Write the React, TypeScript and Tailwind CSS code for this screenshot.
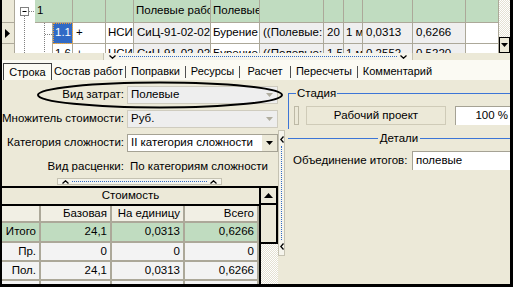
import React from 'react';

type Cell = { c: string; t?: string };

const line = 'border-[#aca899]';

const row1: Cell[] = [
  { c: 'w-[38px]', t: '1' },
  { c: 'w-[33px]' },
  { c: 'w-[28px]' },
  { c: 'w-[77px]', t: 'Полевые работы' },
  { c: 'w-[49px]', t: 'Полевые' },
  { c: 'w-[64px]' },
  { c: 'w-[20px]' },
  { c: 'w-[19px]' },
  { c: 'w-[50px]' },
  { c: 'w-[53px]' },
  { c: 'w-[33px]' },
];

const row2: Cell[] = [
  { c: 'w-[20px] bg-[#316ac5] text-white outline-1 outline-dotted outline-[#f0a030] -outline-offset-1', t: '1.1' },
  { c: 'w-[33px] bg-white pl-[3px]', t: '+' },
  { c: 'w-[28px] bg-white', t: 'НСИ' },
  { c: 'w-[77px] bg-[#efefef] pl-[3px]', t: 'СиЦ-91-02-02-(01)' },
  { c: 'w-[49px] bg-white', t: 'Бурение' },
  { c: 'w-[64px] bg-[#efefef] pl-[3px]', t: '((Полевые: 1)' },
  { c: 'w-[20px] bg-[#efefef] pl-[3px]', t: '20' },
  { c: 'w-[19px] bg-[#efefef]', t: '1 м' },
  { c: 'w-[50px] bg-[#efefef] pl-[3px]', t: '0,0313' },
  { c: 'w-[53px] bg-[#efefef] pl-[3px]', t: '0,6266' },
  { c: 'w-[33px] bg-white' },
];

const row3: Cell[] = [
  { c: 'w-[20px] bg-white', t: '1.6' },
  { c: 'w-[33px] bg-white pl-[3px]', t: '+' },
  { c: 'w-[28px] bg-white', t: 'НСИ' },
  { c: 'w-[77px] bg-[#efefef] pl-[3px]', t: 'СиЦ-91-02-02-(02)' },
  { c: 'w-[49px] bg-white', t: 'Бурение' },
  { c: 'w-[64px] bg-[#efefef] pl-[3px]', t: '((Полевые: 1)' },
  { c: 'w-[20px] bg-[#efefef] pl-[3px]', t: '1,5' },
  { c: 'w-[19px] bg-[#efefef]', t: '1 м' },
  { c: 'w-[50px] bg-[#efefef] pl-[3px]', t: '0,2552' },
  { c: 'w-[53px] bg-[#efefef] pl-[3px]', t: '0,5220' },
  { c: 'w-[33px] bg-white' },
];

const checker =
  'bg-[repeating-conic-gradient(#ffffff_0%_25%,#e4e1d3_0%_50%)] bg-[length:2px_2px]';

function GridCells({ cells, extra }: { cells: Cell[]; extra?: string }) {
  return (
    <>
      {cells.map((cell, i) => (
        <div
          key={i}
          className={`shrink-0 h-full flex items-center pl-[2px] overflow-hidden whitespace-nowrap border-r border-b ${line} ${extra || ''} ${cell.c}`}
        >
          {cell.t}
        </div>
      ))}
    </>
  );
}

function ChevronDown() {
  return (
    <svg width="7" height="4" viewBox="0 0 7 4">
      <path d="M0.5 0.5L3.5 3.2L6.5 0.5" stroke="#000" strokeWidth="1.3" fill="none" />
    </svg>
  );
}

function ChevronUp() {
  return (
    <svg width="7" height="4" viewBox="0 0 7 4">
      <path d="M0.5 3.5L3.5 0.8L6.5 3.5" stroke="#000" strokeWidth="1.3" fill="none" />
    </svg>
  );
}

function ChevronLeft() {
  return (
    <svg width="4" height="7" viewBox="0 0 4 7">
      <path d="M3.5 0.5L0.8 3.5L3.5 6.5" stroke="#000" strokeWidth="1.3" fill="none" />
    </svg>
  );
}

function Arrow({ color }: { color: string }) {
  return (
    <svg width="7" height="4" viewBox="0 0 7 4">
      <path d="M0 0H7L3.5 4Z" fill={color} />
    </svg>
  );
}

function TopGrid() {
  return (
    <div className="flex h-[53px] shrink-0 bg-white overflow-hidden">
      <div className={`w-[13px] shrink-0 flex flex-col bg-[#ece9d8] border-r ${line}`}>
        <div className={`h-[23px] shrink-0 border-b ${line}`} />
        <div className={`h-[21px] shrink-0 border-b ${line} flex items-center pl-[3px]`}>
          <svg width="5" height="9" viewBox="0 0 5 9">
            <path d="M0 0L5 4.5L0 9Z" fill="#000" />
          </svg>
        </div>
        <div className="flex-1" />
      </div>

      <div className="relative w-[484px] shrink-0 flex flex-col">
        <div className="flex h-[23px] shrink-0">
          <div className="w-[20px] shrink-0" />
          <GridCells cells={row1} extra="bg-[#c0dcc0]" />
        </div>
        <div className="flex h-[21px] shrink-0">
          <div className={`w-[38px] shrink-0 border-r ${line}`} />
          <GridCells cells={row2} />
        </div>
        <div className="flex h-[21px] shrink-0">
          <div className={`w-[38px] shrink-0 border-r ${line}`} />
          <GridCells cells={row3} />
        </div>
        {/* линии дерева */}
        <svg className="absolute left-0 top-0" width="38" height="53" viewBox="0 0 38 53">
          <g stroke="#808080" strokeWidth="1" strokeDasharray="1 1" fill="none">
            <path d="M14 11.5H20" />
            <path d="M9.5 16V53" />
            <path d="M29.5 23V53" />
            <path d="M30 34.5H38" />
          </g>
          <rect x="5.5" y="7.5" width="8" height="8" fill="#fff" stroke="#808080" />
          <path d="M7.5 11.5H11.5" stroke="#000" />
        </svg>
      </div>

      <div className="w-[11px] shrink-0 flex flex-col">
        <div className={`flex-1 ${checker}`} />
        <div className="h-[16px] shrink-0 border border-black bg-[#ece9d8] flex items-center justify-center">
          <Arrow color="#000" />
        </div>
      </div>
    </div>
  );
}

function Tabs() {
  const rest = [
    { c: 'w-[73px]', t: 'Состав работ' },
    { c: 'w-[60px]', t: 'Поправки' },
    { c: 'w-[54px]', t: 'Ресурсы' },
    { c: 'w-[51px]', t: 'Расчет' },
    { c: 'w-[67px]', t: 'Пересчеты' },
    { c: 'w-[80px]', t: 'Комментарий' },
  ];
  return (
    <div className="h-[20px] shrink-0 bg-[#fbfaf3] flex items-end pl-px text-[11px]">
      <div className="w-[49px] h-[17px] shrink-0 border-l border-t border-r border-[#404040] flex items-center justify-center">
        Строка
      </div>
      {rest.map((tab, i) => (
        <div key={i} className={`${tab.c} h-[17px] shrink-0 flex items-center`}>
          {i > 0 && <div className="w-px h-[12px] bg-[#505050]" />}
          <div className="flex-1 text-center whitespace-nowrap">{tab.t}</div>
        </div>
      ))}
    </div>
  );
}

function Field({ label, value, kind }: { label: string; value: string; kind: 'off' | 'on' }) {
  return (
    <div className="flex items-center h-[18px] mb-[6px]">
      <div className="w-[122px] shrink-0 text-right whitespace-nowrap">{label}</div>
      <div
        className={`ml-[3px] w-[151px] h-full flex items-center border ${
          kind === 'on' ? 'bg-white border-[#a5a294]' : 'bg-[#eeeeee] border-[#cfccbf]'
        }`}
      >
        <div className="flex-1 pl-[3px] whitespace-nowrap overflow-hidden">{value}</div>
        {kind === 'on' ? (
          <div className="w-[15px] h-full bg-[#ece9d8] flex items-center justify-center">
            <Arrow color="#000" />
          </div>
        ) : (
          <div className="w-[15px] h-full flex items-center justify-center">
            <Arrow color="#b0ad9f" />
          </div>
        )}
      </div>
    </div>
  );
}

const costRows = [
  { name: 'Итого', b: '24,1', u: '0,0313', a: '0,6266', bg: 'bg-[#c0dcc0]', h: 'h-[20px]' },
  { name: 'Пр.', b: '0', u: '0', a: '0', bg: 'bg-[#f3f3f3]', h: 'h-[19px]' },
  { name: 'Пол.', b: '24,1', u: '0,0313', a: '0,6266', bg: 'bg-[#f3f3f3]', h: 'h-[19px]' },
  { name: '', b: '', u: '', a: '', bg: 'bg-[#f3f3f3]', h: 'h-[19px]' },
];

function CostTable() {
  const cell = `shrink-0 h-full flex items-center justify-end pr-[3px] border-r-2 border-b-2 ${line}`;
  return (
    <div className="mt-px flex h-[98px] border-t-2 border-black overflow-hidden">
      <div className="w-[259px] shrink-0 flex flex-col border-r-2 border-black">
        <div className="h-[18px] shrink-0 border-b-2 border-black flex items-center justify-center">
          Стоимость
        </div>
        <div className="h-[17px] shrink-0 flex bg-[#f1efe4]">
          <div className={`${cell} w-[39px]`} />
          <div className={`${cell} w-[71px] justify-center pr-0`}>Базовая</div>
          <div className={`${cell} w-[73px] justify-center pr-0`}>На единицу</div>
          <div className={`${cell} flex-1 justify-center pr-0 border-r-0`}>Всего</div>
        </div>
        {costRows.map((r, i) => (
          <div key={i} className={`${r.h} shrink-0 flex ${r.bg}`}>
            <div className={`${cell} w-[39px]`}>{r.name}</div>
            <div className={`${cell} w-[71px]`}>{r.b}</div>
            <div className={`${cell} w-[73px]`}>{r.u}</div>
            <div className={`${cell} flex-1 border-r-0`}>{r.a}</div>
          </div>
        ))}
      </div>
      <div className="w-[17px] shrink-0 flex flex-col">
        <div className="h-[17px] shrink-0 border-2 border-t-0 border-l-0 border-black bg-[#ece9d8] flex items-center justify-center">
          <svg width="9" height="5" viewBox="0 0 9 5">
            <path d="M0 5H9L4.5 0Z" fill="#000" />
          </svg>
        </div>
        <div className="h-[39px] shrink-0 border-r-2 border-b-2 border-black bg-[#ece9d8]" />
        <div className={`flex-1 ${checker}`} />
      </div>
    </div>
  );
}

function LeftPanel() {
  return (
    <div className="w-[276px] shrink-0 flex flex-col pt-[6px]">
      <Field label="Вид затрат:" value="Полевые" kind="off" />
      <Field label="Множитель стоимости:" value="Руб." kind="off" />
      <Field label="Категория сложности:" value="II категория сложности" kind="on" />
      <div className="flex items-center h-[14px] mt-[2px]">
        <div className="w-[122px] shrink-0 text-right whitespace-nowrap">Вид расценки:</div>
        <div className="ml-[6px] whitespace-nowrap overflow-hidden">По категориям сложности</div>
      </div>
      <div className="mt-[4px] ml-[55px] w-[165px] h-[7px] shrink-0 flex items-center gap-[3px] px-[4px] border border-[#c5c2b2] bg-[#f5f4ec]">
        <ChevronUp />
        <div className="flex-1 border-t border-dotted border-[#316ac5]" />
        <ChevronUp />
      </div>
      <CostTable />
    </div>
  );
}

function VSplitter() {
  return (
    <div className="w-[7px] shrink-0 flex flex-col">
      <div className="h-[50px] shrink-0" />
      <div className="h-[126px] shrink-0 flex flex-col items-center py-[5px] gap-[3px] border border-[#c5c2b2] bg-[#f5f4ec]">
        <ChevronLeft />
        <div className="flex-1 border-l border-dotted border-[#316ac5]" />
        <ChevronLeft />
      </div>
    </div>
  );
}

function RightPanel() {
  return (
    <div className="flex-1 min-w-0 flex flex-col pt-[7px]">
      <fieldset className="ml-[3px] min-w-0 border-l border-t border-[#3d75d6] pb-[4px]">
        <legend className="ml-[7px] px-px leading-[13px]">Стадия</legend>
        <div className="flex items-center h-[19px] mt-[6px]">
          <div className="ml-[5px] w-[5px] h-[19px] shrink-0 border border-[#bdb9a6]" />
          <div className="ml-[7px] w-[140px] h-[19px] shrink-0 border border-[#cfcbb8] flex items-center justify-center">
            Рабочий проект
          </div>
          <div className="ml-[9px] flex-1 h-[19px] bg-white border-l border-t border-[#a5a294] flex items-center justify-end pr-[2px]">
            100 %
          </div>
        </div>
      </fieldset>
      <div className="mt-[3px] ml-[3px] h-[13px] flex items-center">
        <div className="flex-1 border-t border-[#3d75d6]" />
        <div className="px-[2px]">Детали</div>
        <div className="flex-1 border-t border-[#3d75d6]" />
      </div>
      <div className="mt-[6px] flex items-center h-[19px]">
        <div className="ml-[8px] w-[119px] shrink-0 whitespace-nowrap">Объединение итогов:</div>
        <div className="flex-1 h-full bg-white border-l border-t border-[#a5a294] flex items-center pl-[3px]">
          полевые
        </div>
      </div>
    </div>
  );
}

export default function App() {
  return (
    <div className="relative w-[513px] h-[287px] overflow-hidden bg-[#ece9d8] border-l-2 border-r-[3px] border-b-[3px] border-black font-['Liberation_Sans',Arial,sans-serif] text-[11.5px] leading-none text-black flex flex-col">
      <TopGrid />
      <div className="h-[7px] shrink-0 flex">
        <div className="w-[101px] shrink-0" />
        <div className="w-[310px] shrink-0 flex items-center gap-[3px] px-[5px] border-x border-[#c5c2b2] bg-[#f5f4ec]">
          <ChevronDown />
          <div className="flex-1 border-t border-dotted border-[#316ac5]" />
          <ChevronDown />
        </div>
        <div className="flex-1" />
      </div>
      <Tabs />
      <div className="flex h-[204px] shrink-0">
        <LeftPanel />
        <VSplitter />
        <RightPanel />
      </div>
      {/* пометка-эллипс */}
      <svg className="absolute left-[34px] top-[80px]" width="250" height="30" viewBox="0 0 250 30">
        <ellipse cx="124" cy="15" rx="122" ry="12.5" fill="none" stroke="#000" strokeWidth="2" />
      </svg>
    </div>
  );
}
